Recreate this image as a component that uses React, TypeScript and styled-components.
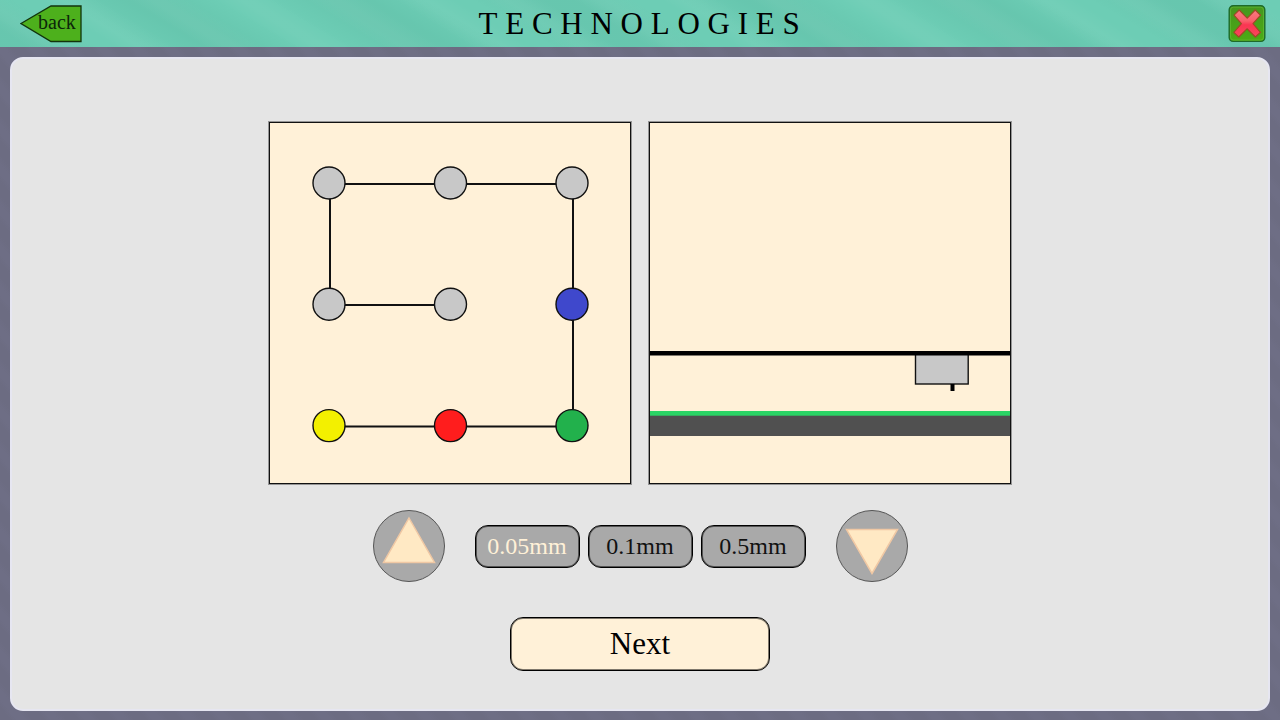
import React, { useState } from "react";
import styled, { createGlobalStyle } from "styled-components";

const Global = createGlobalStyle`
  *, *::before, *::after { box-sizing: border-box; }
  body { margin: 0; font-family: "Liberation Serif", "Times New Roman", serif; color: #000; }
  button { font: inherit; color: inherit; padding: 0; cursor: pointer; }
`;

const Page = styled.div`
  min-height: 100vh;
  display: flex;
  flex-direction: column;
  background: repeating-linear-gradient(50deg, #6c6c82 0 9px, #6e6e85 14px 20px, #6c6c82 26px);
`;

const Header = styled.header`
  display: grid;
  grid-template-columns: 1fr auto 1fr;
  align-items: center;
  height: 47px;
  padding: 0 14px 0 20px;
  background:
    repeating-linear-gradient(32deg, rgba(255, 255, 255, 0) 0 14px, rgba(255, 255, 255, 0.04) 26px 32px, rgba(255, 255, 255, 0) 47px),
    repeating-linear-gradient(30deg, rgba(0, 90, 70, 0.06) 0 20px, rgba(0, 90, 70, 0) 48px 70px, rgba(0, 90, 70, 0.06) 103px),
    #6dcdb5;
`;

const Title = styled.h1`
  margin: 0;
  font-size: 31px;
  line-height: 36px;
  font-weight: 400;
  letter-spacing: 0.25em;
`;

const BackButton = styled.button`
  display: grid;
  justify-self: start;
  width: 62px;
  height: 38px;
  border: 0;
  background: none;

  & > * { grid-area: 1 / 1; }
`;

const BackLabel = styled.span`
  padding: 5px 0 0 12px;
  color: #0c260a;
  font-size: 20px;
  line-height: 24px;
`;

const CloseButton = styled.button`
  display: flex;
  justify-self: end;
  border: 0;
  background: none;
`;

const Panel = styled.main`
  flex: 1;
  display: flex;
  flex-direction: column;
  align-items: center;
  margin: 10px;
  padding: 63px 20px 38px;
  border: 2px solid #e6e6f1;
  border-radius: 13px;
  background: #e5e5e5;
`;

const Boards = styled.div`
  display: flex;
  flex-wrap: wrap;
  justify-content: center;
  gap: 18px;
`;

const Board = styled.section`
  display: flex;
  width: 362px;
  border: 1px solid #111;
  background: #fff1d8;
  box-shadow: 0 0 0 1px rgba(0, 0, 0, 0.35);
`;

const Controls = styled.div`
  display: flex;
  align-items: center;
  gap: 30px;
  margin-top: 26px;
`;

const Steps = styled.div`
  display: flex;
  gap: 8px;
`;

const StepButton = styled.button<{ $active: boolean }>`
  width: 105px;
  height: 43px;
  border: 1px solid #000;
  border-radius: 13px;
  background: #a9a9a9;
  box-shadow: inset 0 0 0 1px rgba(0, 0, 0, 0.5);
  color: ${(p) => (p.$active ? "#fff1d8" : "#111")};
  font-size: 24px;
`;

const RoundButton = styled.button`
  display: flex;
  width: 72px;
  height: 72px;
  border: 1px solid #555;
  border-radius: 50%;
  background: #a9a9a9;
`;

const NextButton = styled.button`
  width: 260px;
  height: 54px;
  margin-top: 35px;
  border: 1px solid #000;
  border-radius: 13px;
  background: #fff1d8;
  box-shadow: inset 0 0 0 1px rgba(0, 0, 0, 0.5);
  font-size: 31px;
`;

const nodes = [
  { x: 59, y: 60, fill: "#c8c8c8" },
  { x: 180.5, y: 60, fill: "#c8c8c8" },
  { x: 302, y: 60, fill: "#c8c8c8" },
  { x: 59, y: 181.3, fill: "#c8c8c8" },
  { x: 180.5, y: 181.3, fill: "#c8c8c8" },
  { x: 302, y: 181.3, fill: "#3f48cc" },
  { x: 59, y: 302.6, fill: "#f3f000" },
  { x: 180.5, y: 302.6, fill: "#ff1d1d" },
  { x: 302, y: 302.6, fill: "#22b14c" },
];

const steps = ["0.05mm", "0.1mm", "0.5mm"];

function ProbePath() {
  return (
    <svg width="360" height="360" viewBox="0 0 360 360" role="img" aria-label="Levelling points">
      <path d="M180 182H60V61H303V303.5H59" fill="none" stroke="#111" strokeWidth="2" />
      {nodes.map((n) => (
        <circle key={`${n.x}-${n.y}`} cx={n.x} cy={n.y} r="16" fill={n.fill} stroke="#111" strokeWidth="1.4" />
      ))}
    </svg>
  );
}

function SideView() {
  return (
    <svg width="360" height="360" viewBox="0 0 360 360" role="img" aria-label="Print head above the bed">
      <rect x="265.5" y="230.5" width="52.7" height="30.5" fill="#c8c8c8" stroke="#111" strokeWidth="1.4" />
      <rect x="0" y="228" width="360" height="4.5" fill="#000" />
      <rect x="300.5" y="261" width="4" height="7" fill="#000" />
      <rect x="0" y="288" width="360" height="5" fill="#2bd465" />
      <rect x="0" y="292.7" width="360" height="20.3" fill="#505050" />
    </svg>
  );
}

export default function App() {
  const [step, setStep] = useState(steps[0]);
  return (
    <Page>
      <Global />
      <Header>
        <BackButton type="button">
          <svg width="62" height="38" viewBox="0 0 62 38" aria-hidden="true">
            <path d="M1 18.5L31 1H61V36.5H31Z" fill="#4db01c" stroke="#12330c" strokeWidth="1.3" />
          </svg>
          <BackLabel>back</BackLabel>
        </BackButton>
        <Title>TECHNOLOGIES</Title>
        <CloseButton type="button" aria-label="Close">
          <svg width="38" height="38" viewBox="0 0 38 38" aria-hidden="true">
            <defs>
              <linearGradient id="tile" x1="0" y1="0" x2="0" y2="1">
                <stop offset="0" stopColor="#45961f" />
                <stop offset="1" stopColor="#4cab14" />
              </linearGradient>
              <linearGradient id="cross" x1="0" y1="0" x2="0" y2="1">
                <stop offset="0" stopColor="#f87a80" />
                <stop offset="0.4" stopColor="#f9606c" />
                <stop offset="0.55" stopColor="#fb3552" />
                <stop offset="1" stopColor="#f8475c" />
              </linearGradient>
            </defs>
            <rect x="1.2" y="0.8" width="35.6" height="35.6" rx="4" fill="url(#tile)" stroke="#1d6a2a" strokeWidth="1.4" />
            <rect x="2.5" y="2.1" width="33" height="33" rx="3" fill="none" stroke="#6cc23c" strokeOpacity="0.55" strokeWidth="1" />
            <path
              d="M11.2 5L19.2 13.2L27.2 5L32.6 10.2L25 18.6L32.4 27.4L27.4 32L19 23.8L10.8 32L5.8 27.4L13.4 18.6L6 10.2Z"
              fill="url(#cross)"
              stroke="#9c4a26"
              strokeWidth="1.2"
              strokeLinejoin="round"
            />
          </svg>
        </CloseButton>
      </Header>
      <Panel>
        <Boards>
          <Board>
            <ProbePath />
          </Board>
          <Board>
            <SideView />
          </Board>
        </Boards>
        <Controls>
          <RoundButton type="button" aria-label="Raise">
            <svg width="70" height="70" viewBox="0 0 70 70" aria-hidden="true">
              <path d="M35 7L60.5 51.5H9.5Z" fill="#ffe9c4" stroke="#f0c8a4" strokeWidth="1.5" />
            </svg>
          </RoundButton>
          <Steps>
            {steps.map((s) => (
              <StepButton key={s} type="button" $active={s === step} aria-pressed={s === step} onClick={() => setStep(s)}>
                {s}
              </StepButton>
            ))}
          </Steps>
          <RoundButton type="button" aria-label="Lower">
            <svg width="70" height="70" viewBox="0 0 70 70" aria-hidden="true">
              <path d="M35 62.5L60.5 18.5H9.5Z" fill="#ffe9c4" stroke="#f0c8a4" strokeWidth="1.5" />
            </svg>
          </RoundButton>
        </Controls>
        <NextButton type="button">Next</NextButton>
      </Panel>
    </Page>
  );
}
